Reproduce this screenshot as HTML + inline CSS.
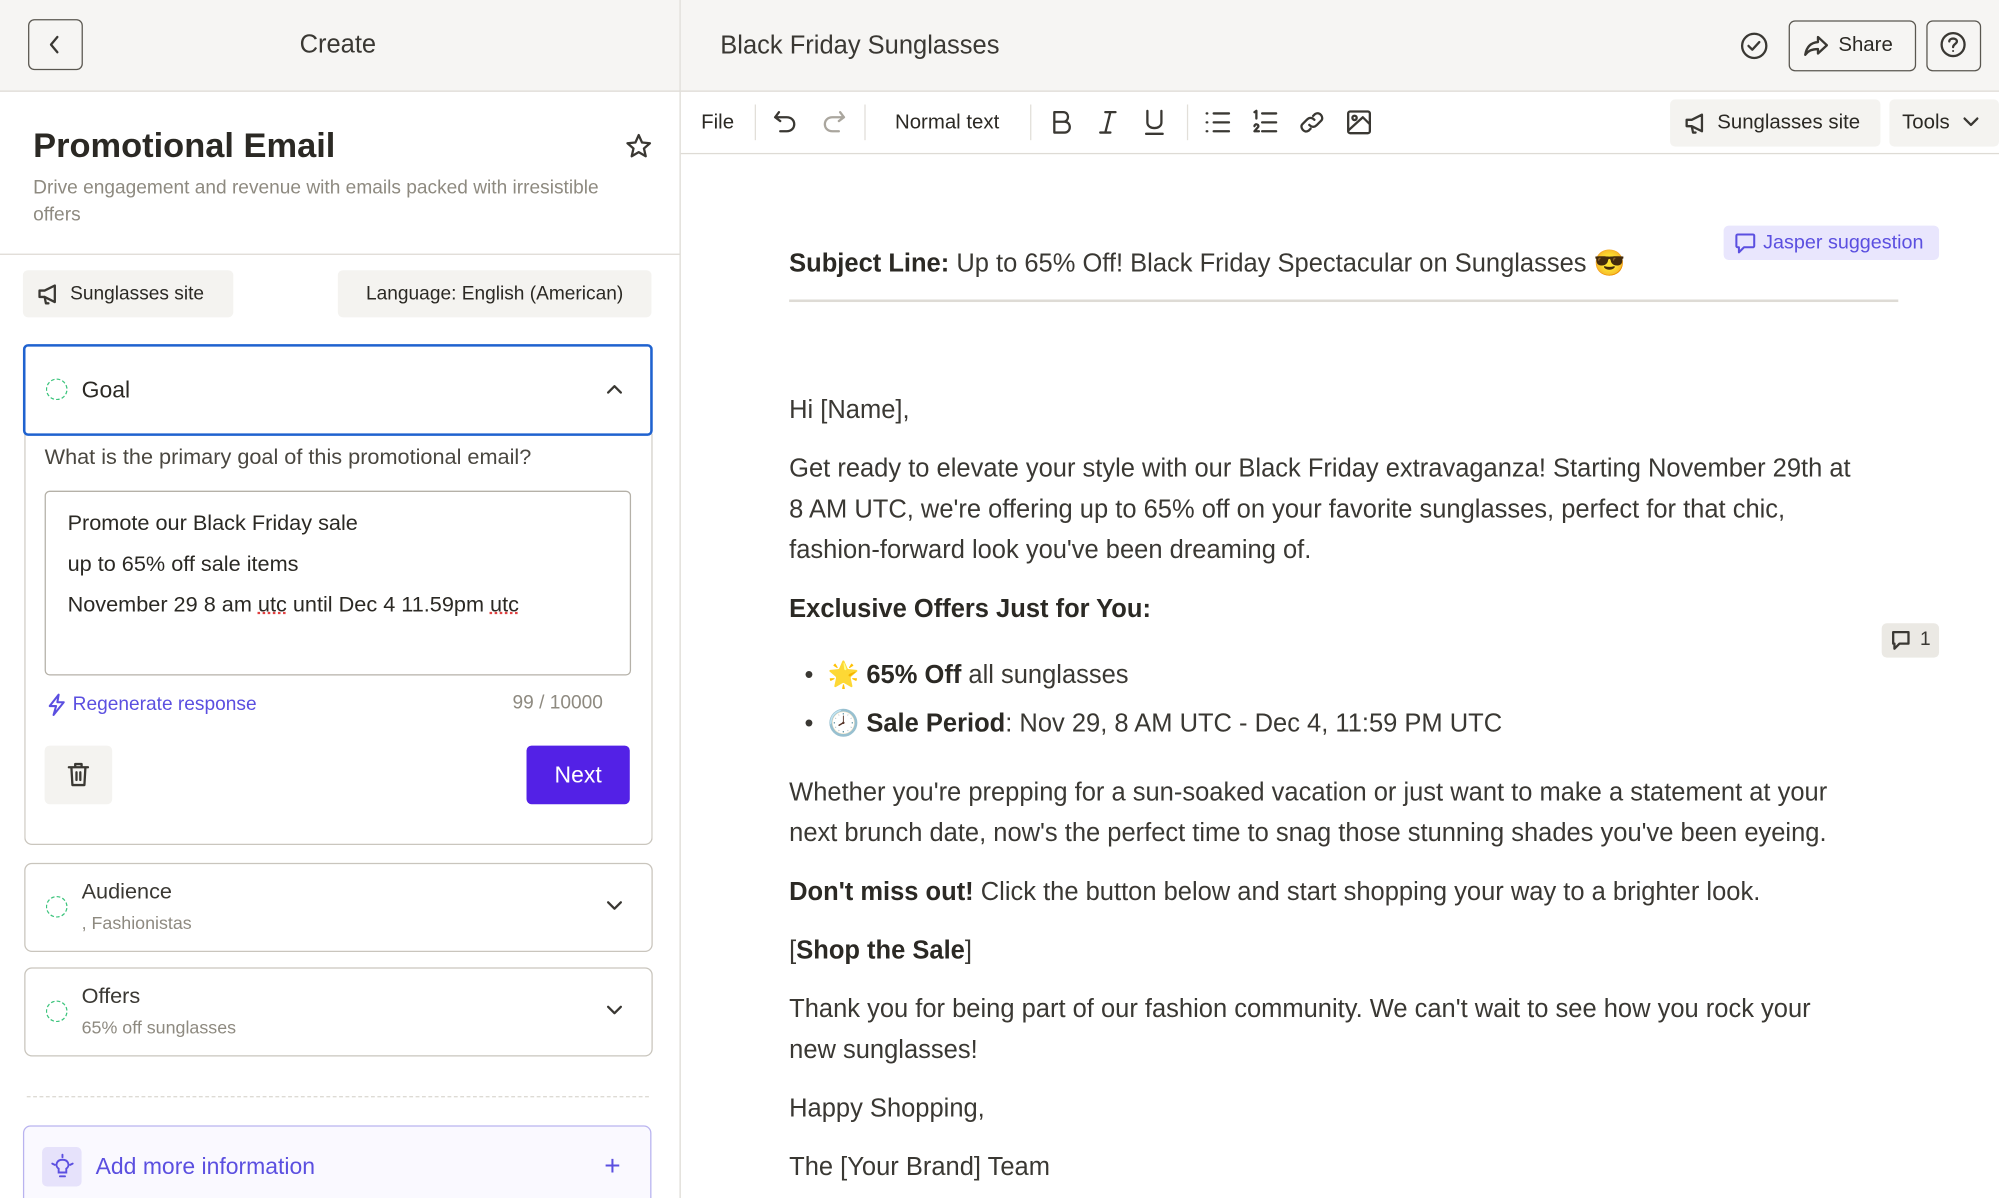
<!DOCTYPE html>
<html><head><meta charset="utf-8"><style>
html,body{margin:0;padding:0;width:1999px;height:1198px;overflow:hidden;background:#fff}
#s{position:absolute;left:0;top:0;width:1568px;height:940px;overflow:hidden;transform:scale(1.27487,1.27447);transform-origin:0 0;font-family:"Liberation Sans",sans-serif;color:#2b2924}
.a{position:absolute}
svg{position:absolute}
.ic{fill:none;stroke:#3a3833;stroke-width:1.8;stroke-linecap:round;stroke-linejoin:round}
.p{font-size:20px;color:#3a3833;position:absolute;left:619px;line-height:32px}
b{font-weight:bold;color:#2b2924}
.card{position:absolute;left:19px;width:491px;border:1.5px solid #c9c5bd;border-radius:6px;background:#fff}
.dot{position:absolute;width:15px;height:15px;border:1.5px dashed #3cc47c;border-radius:50%}
</style></head><body><div id="s">
<div class="a" style="left:0;top:0;width:534px;height:71px;background:#f6f5f3;border-bottom:1px solid #dedbd5"></div>
<div class="a" style="left:22px;top:15px;width:41px;height:38px;border:1.5px solid #5a5750;border-radius:5px"></div>
<svg style="left:36px;top:27px" width="14" height="16"><path class="ic" d="M9 2 L4 8 L9 14"/></svg>
<div class="a" style="left:0;width:530px;top:24px;text-align:center;font-size:20px;color:#3a3833">Create</div>
<div class="a" style="left:533px;top:0;width:1px;height:940px;background:#dedbd5"></div>
<div class="a" style="left:26px;top:99px;font-size:27px;font-weight:bold;color:#2b2924">Promotional Email</div>
<svg style="left:490px;top:104px" width="22" height="22"><path class="ic" d="M11 2 L13.6 7.8 L19.8 8.4 L15.1 12.5 L16.5 18.6 L11 15.4 L5.5 18.6 L6.9 12.5 L2.2 8.4 L8.4 7.8 Z"/></svg>
<div class="a" style="left:26px;top:137px;width:480px;font-size:15px;line-height:21px;color:#8e8a80">Drive engagement and revenue with emails packed with irresistible offers</div>
<div class="a" style="left:0;top:199px;width:533px;height:1px;background:#dedbd5"></div>
<div class="a" style="left:18px;top:212px;width:165px;height:37px;background:#f4f3f0;border-radius:4px"></div>
<svg style="left:28px;top:221px" width="20" height="20"><path class="ic" d="M3 7 L3 12 L7 12 L15 16 L15 3 L7 7 Z M7 12 L8 17 L10 17"/></svg>
<div class="a" style="left:55px;top:222px;font-size:15px;color:#2b2924">Sunglasses site</div>
<div class="a" style="left:265px;top:212px;width:246px;height:37px;background:#f4f3f0;border-radius:4px"></div>
<div class="a" style="left:265px;width:246px;top:222px;text-align:center;font-size:15px;color:#2b2924">Language: English (American)</div>
<div class="card" style="top:340px;height:322px;border-top:none;border-radius:0 0 6px 6px"></div>
<div class="a" style="left:18px;top:270px;width:490px;height:68px;border:2px solid #1f62cf;border-radius:4px;background:#fff"></div>
<div class="dot" style="left:36px;top:297px"></div>
<div class="a" style="left:64px;top:296px;font-size:18px;color:#2b2924">Goal</div>
<svg style="left:475px;top:299px" width="14" height="12"><path class="ic" d="M2 9 L7 4 L12 9"/></svg>
<div class="a" style="left:35px;top:349px;font-size:17px;color:#4a4740">What is the primary goal of this promotional email?</div>
<div class="a" style="left:35px;top:385px;width:458px;height:143px;border:1.5px solid #b5b1a8;border-radius:4px"></div>
<div class="a" style="left:53px;top:395px;font-size:17px;line-height:32px;color:#2b2924">Promote our Black Friday sale<br>up to 65% off sale items<br>November 29 8 am <span style="text-decoration:underline dotted #e04040">utc</span> until Dec 4 11.59pm <span style="text-decoration:underline dotted #e04040">utc</span></div>
<svg style="left:37px;top:544px" width="16" height="18"><path d="M9 1 L2 10 L7 10 L5 17 L13 7 L8 7 Z" fill="none" stroke="#5b4fe0" stroke-width="1.6" stroke-linejoin="round"/></svg>
<div class="a" style="left:57px;top:544px;font-size:15px;color:#5b4fe0">Regenerate response</div>
<div class="a" style="left:402px;top:543px;font-size:15px;color:#8e8a80">99 / 10000</div>
<div class="a" style="left:35px;top:585px;width:53px;height:46px;background:#f4f3f0;border-radius:4px"></div>
<svg style="left:51px;top:597px" width="22" height="22"><path class="ic" d="M3 5 L18 5 M8 5 L8 2.5 L13 2.5 L13 5 M5 5 L5.8 19 L15.2 19 L16 5 M9 9 L9 15 M12 9 L12 15"/></svg>
<div class="a" style="left:413px;top:585px;width:81px;height:46px;background:#5321e6;border-radius:4px;color:#fff;font-size:18px;text-align:center;line-height:46px">Next</div>
<div class="card" style="top:677px;height:68px"></div>
<div class="dot" style="left:36px;top:703px"></div>
<div class="a" style="left:64px;top:690px;font-size:17px;color:#3a3833">Audience</div>
<div class="a" style="left:64px;top:716px;font-size:14px;color:#8e8a80">, Fashionistas</div>
<svg style="left:475px;top:705px" width="14" height="12"><path class="ic" d="M2 3 L7 8 L12 3"/></svg>
<div class="card" style="top:759px;height:68px"></div>
<div class="dot" style="left:36px;top:785px"></div>
<div class="a" style="left:64px;top:772px;font-size:17px;color:#3a3833">Offers</div>
<div class="a" style="left:64px;top:798px;font-size:14px;color:#8e8a80">65% off sunglasses</div>
<svg style="left:475px;top:787px" width="14" height="12"><path class="ic" d="M2 3 L7 8 L12 3"/></svg>
<div class="a" style="left:21px;top:860px;width:488px;border-top:1.5px dashed #dedbd5"></div>
<div class="a" style="left:18px;top:883px;width:491px;height:70px;border:1.5px solid #b9b3ef;border-radius:6px;background:#faf9ff"></div>
<div class="a" style="left:33px;top:900px;width:31px;height:31px;background:#e6e2fb;border-radius:4px"></div>
<svg style="left:38px;top:905px" width="22" height="22"><path d="M8 15 L8 12 C5 10 6 5 11 5 C16 5 17 10 14 12 L14 15 Z M9 18 L13 18 M11 1 L11 3 M3 8 L5 9 M19 8 L17 9" fill="none" stroke="#5b4fe0" stroke-width="1.5" stroke-linecap="round"/></svg>
<div class="a" style="left:75px;top:905px;font-size:18px;color:#5b4fe0">Add more information</div>
<div class="a" style="left:474px;top:902px;font-size:22px;color:#5b4fe0">+</div>
<div class="a" style="left:534px;top:0;width:1034px;height:71px;background:#f6f5f3;border-bottom:1px solid #dedbd5"></div>
<div class="a" style="left:565px;top:25px;font-size:20px;color:#3a3833">Black Friday Sunglasses</div>
<svg style="left:1364px;top:24px" width="24" height="24"><circle cx="12" cy="12" r="9.5" class="ic"/><path class="ic" d="M7.5 12 L10.5 15 L16 9"/></svg>
<div class="a" style="left:1403px;top:16px;width:98px;height:38px;border:1.5px solid #5a5750;border-radius:5px"></div>
<svg style="left:1414px;top:26px" width="22" height="20"><path class="ic" d="M12 3 L19 9.5 L12 16 L12 12.5 C7 12.5 4 14 2 17 C3 11 6 7.5 12 7 Z"/></svg>
<div class="a" style="left:1442px;top:27px;font-size:16px;color:#2b2924">Share</div>
<div class="a" style="left:1511px;top:16px;width:41px;height:38px;border:1.5px solid #5a5750;border-radius:5px"></div>
<svg style="left:1521px;top:24px" width="22" height="22"><circle cx="11" cy="11" r="9" class="ic"/><path class="ic" d="M8 8.5 C8 5.5 14 5.5 14 8.5 C14 10.5 11 10.5 11 13"/><circle cx="11" cy="16" r="0.8" fill="#3a3833"/></svg>
<div class="a" style="left:534px;top:120px;width:1034px;height:1px;background:#dedbd5"></div>
<div class="a" style="left:550px;top:88px;font-size:16px;color:#2b2924">File</div>
<div class="a" style="left:592px;top:82px;width:1px;height:28px;background:#e2dfd9"></div>
<svg style="left:605px;top:85px" width="22" height="22"><path class="ic" d="M6 3 L3 7 L7 10 M3 7 L12 7 C20 7 20 18 12 18 L7 18"/></svg>
<svg style="left:643px;top:85px" width="22" height="22"><path class="ic" d="M16 3 L19 7 L15 10 M19 7 L10 7 C2 7 2 18 10 18 L15 18" style="stroke:#aaa69e"/></svg>
<div class="a" style="left:678px;top:82px;width:1px;height:28px;background:#e2dfd9"></div>
<div class="a" style="left:702px;top:88px;font-size:16px;color:#2b2924">Normal text</div>
<div class="a" style="left:808px;top:82px;width:1px;height:28px;background:#e2dfd9"></div>
<svg style="left:822px;top:85px" width="22" height="22"><path class="ic" d="M5 3 L12 3 C17 3 17 10.5 12 10.5 L5 10.5 M5 3 L5 19 L13 19 C18.5 19 18.5 10.5 13 10.5"/></svg>
<svg style="left:858px;top:85px" width="22" height="22"><path class="ic" d="M9 3 L17 3 M5 19 L13 19 M13 3 L9 19"/></svg>
<svg style="left:895px;top:85px" width="22" height="22"><path class="ic" d="M5 2 L5 11 C5 17 16 17 16 11 L16 2 M4 20 L17 20"/></svg>
<div class="a" style="left:931px;top:82px;width:1px;height:28px;background:#e2dfd9"></div>
<svg style="left:944px;top:85px" width="22" height="22"><path class="ic" d="M8 4 L20 4 M8 11 L20 11 M8 18 L20 18 M2.5 4 L3 4 M2.5 11 L3 11 M2.5 18 L3 18"/></svg>
<svg style="left:981px;top:85px" width="22" height="22"><path class="ic" d="M9 4 L20 4 M9 11 L20 11 M9 18 L20 18 M3 3 L4.5 2 L4.5 8 M3 14 C3 12 6.5 12 6 14.5 L3 18 L6.5 18"/></svg>
<svg style="left:1018px;top:85px" width="22" height="22"><path class="ic" d="M9 13 C11 15 13 15 15 13 L18.5 9.5 C20.5 7.5 17.5 2 13.5 4.5 L12 6 M13 9 C11 7 9 7 7 9 L3.5 12.5 C1.5 14.5 4.5 20 8.5 17.5 L10 16"/></svg>
<svg style="left:1055px;top:85px" width="22" height="22"><rect x="2.5" y="2.5" width="17" height="17" rx="1.5" class="ic"/><circle cx="7.5" cy="7.5" r="1.7" class="ic"/><path class="ic" d="M3 17 L14 7 L19 12"/></svg>
<div class="a" style="left:1310px;top:78px;width:165px;height:37px;background:#f4f3f0;border-radius:4px"></div>
<svg style="left:1320px;top:87px" width="20" height="20"><path class="ic" d="M3 7 L3 12 L7 12 L15 16 L15 3 L7 7 Z M7 12 L8 17 L10 17"/></svg>
<div class="a" style="left:1347px;top:88px;font-size:16px;color:#2b2924">Sunglasses site</div>
<div class="a" style="left:1482px;top:78px;width:86px;height:37px;background:#f4f3f0;border-radius:4px"></div>
<div class="a" style="left:1492px;top:88px;font-size:16px;color:#2b2924">Tools</div>
<svg style="left:1539px;top:90px" width="14" height="12"><path class="ic" d="M2 3 L7 8 L12 3"/></svg>
<div class="a" style="left:1352px;top:177px;width:169px;height:27px;background:#e9e6fd;border-radius:4px"></div>
<svg style="left:1360px;top:182px" width="18" height="19"><path d="M3 2 L15 2 C16 2 16 3 16 3 L16 11 C16 12 15 12 15 12 L8 12 L4 16 L4 12 L3 12 C2 12 2 11 2 11 L2 3 C2 2 3 2 3 2 Z" fill="none" stroke="#5b4fe0" stroke-width="1.6" stroke-linejoin="round"/></svg>
<div class="a" style="left:1383px;top:182px;font-size:15.5px;color:#5b4fe0">Jasper suggestion</div>
<div class="p" style="top:191px"><b>Subject Line:</b> Up to 65% Off! Black Friday Spectacular on Sunglasses 😎</div>
<div class="a" style="left:619px;top:235px;width:870px;height:1.5px;background:#dedbd5"></div>
<div class="p" style="top:306px">Hi [Name],</div>
<div class="p" style="top:352px;width:845px">Get ready to elevate your style with our Black Friday extravaganza! Starting November 29th at 8 AM UTC, we're offering up to 65% off on your favorite sunglasses, perfect for that chic, fashion-forward look you've been dreaming of.</div>
<div class="p" style="top:462px"><b>Exclusive Offers Just for You:</b></div>
<div class="a" style="left:1476px;top:489px;width:45px;height:27px;background:#ebe9e4;border-radius:4px"></div>
<svg style="left:1482px;top:494px" width="18" height="18"><path class="ic" d="M3 2 L15 2 L15 11 L8 11 L4 15 L4 11 L3 11 Z"/></svg>
<div class="a" style="left:1506px;top:493px;font-size:15px;color:#3a3833">1</div>
<div class="p" style="top:514px;left:631px">•&nbsp; 🌟 <b>65% Off</b> all sunglasses</div>
<div class="p" style="top:552px;left:631px">•&nbsp; 🕗 <b>Sale Period</b>: Nov 29, 8 AM UTC - Dec 4, 11:59 PM UTC</div>
<div class="p" style="top:606px;width:845px">Whether you're prepping for a sun-soaked vacation or just want to make a statement at your next brunch date, now's the perfect time to snag those stunning shades you've been eyeing.</div>
<div class="p" style="top:684px"><b>Don't miss out!</b> Click the button below and start shopping your way to a brighter look.</div>
<div class="p" style="top:730px">[<b>Shop the Sale</b>]</div>
<div class="p" style="top:776px;width:830px">Thank you for being part of our fashion community. We can't wait to see how you rock your new sunglasses!</div>
<div class="p" style="top:854px">Happy Shopping,</div>
<div class="p" style="top:900px">The [Your Brand] Team</div>
</div></body></html>
